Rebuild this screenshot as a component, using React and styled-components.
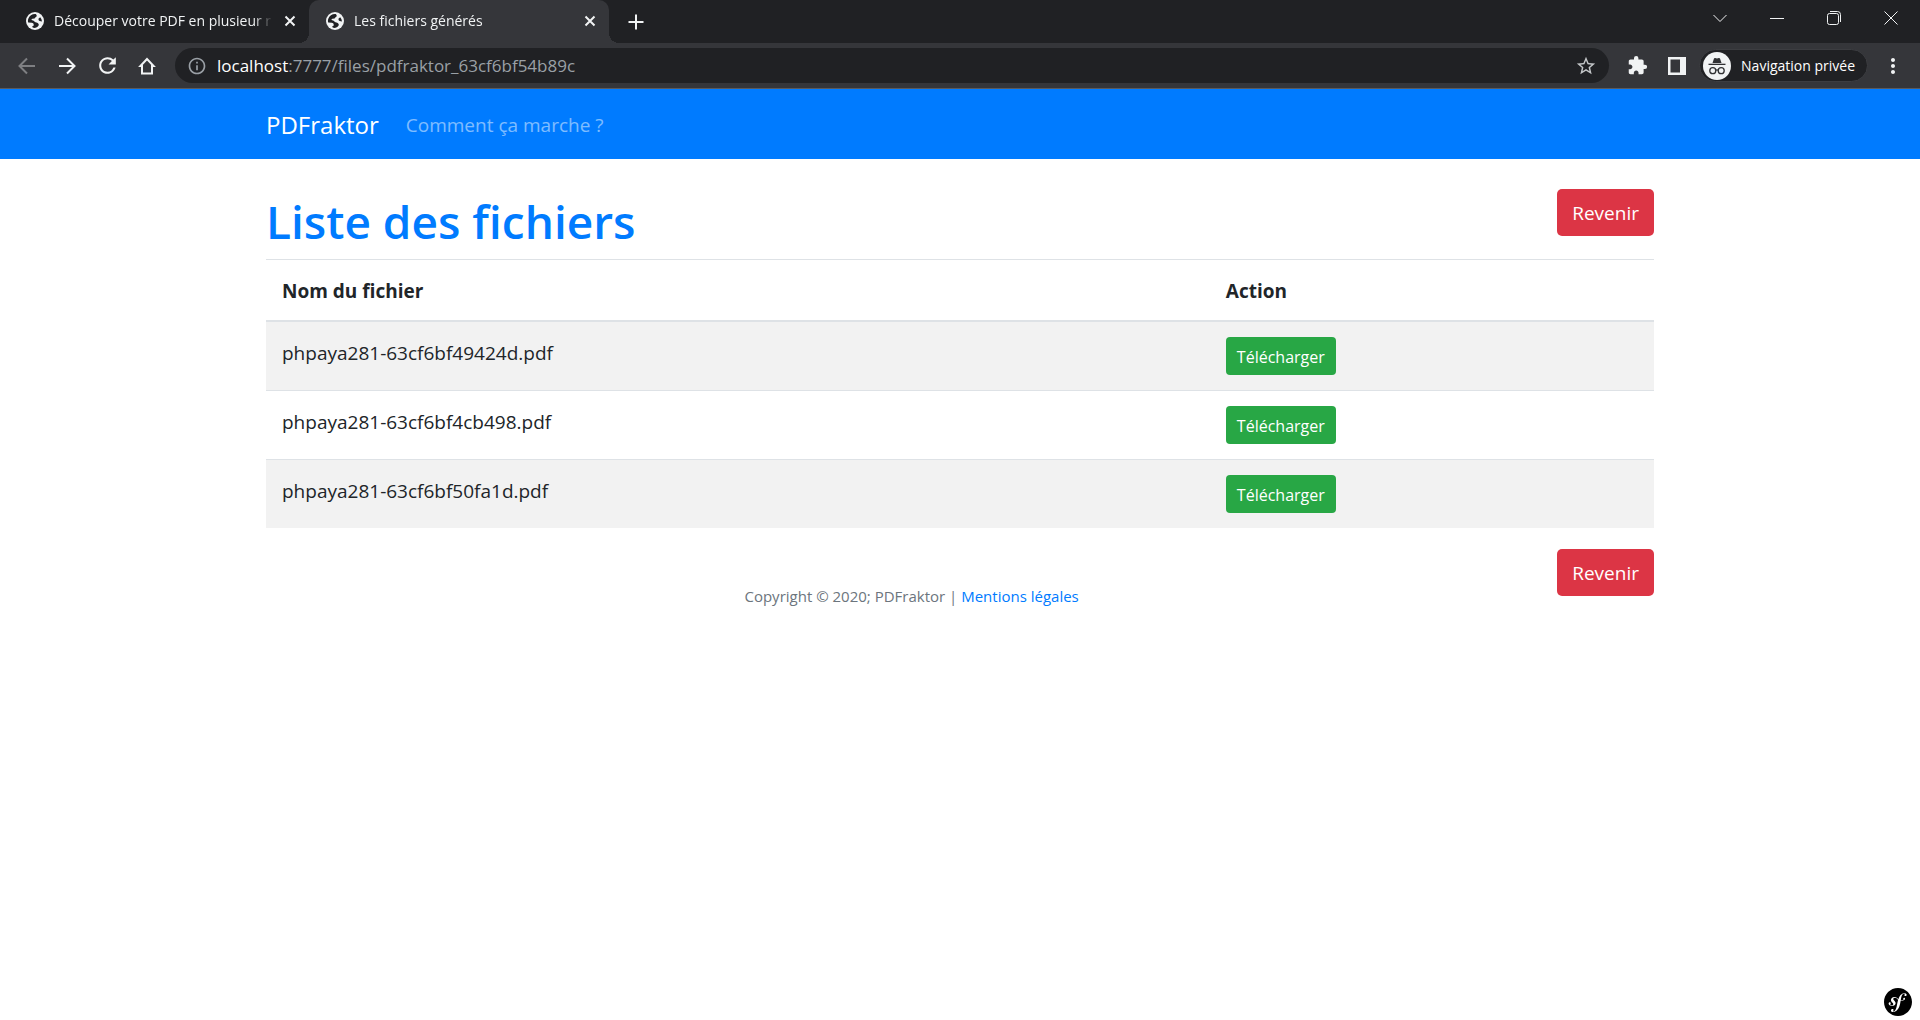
import React from "react";
import styled, { createGlobalStyle, css } from "styled-components";
import {
  MdRefresh, MdInfoOutline, MdStarBorder, MdExtension, MdMoreVert,
} from "react-icons/md";
import { SiSymfony } from "react-icons/si";

const GlobalStyle = createGlobalStyle`
  *, *::before, *::after { box-sizing: border-box; }
  body {
    margin: 0;
    background: #fff;
    color: #212529;
    font-family: "Segoe UI", "Open Sans", "Noto Sans", sans-serif;
    font-size: 19px;
    line-height: 32px;
  }
  svg { display: block; flex: none; }
`;

const IconButton = styled.button`
  display: flex;
  align-items: center;
  justify-content: center;
  flex: none;
  width: ${(p) => p.$width || 40}px;
  height: ${(p) => p.$height || 36}px;
  padding: 0;
  border: 0;
  background: none;
  color: ${(p) => (p.$muted ? "#7e7f82" : "#f1f3f4")};
  cursor: pointer;
`;

const TabStrip = styled.div`
  display: flex;
  height: 43px;
  background: #202124;
  color: #f1f3f4;
`;

const Tabs = styled.div`
  display: flex;
  flex: 1;
  min-width: 0;
  padding-left: 9px;
`;

const Tab = styled.div`
  position: relative;
  display: flex;
  align-items: center;
  flex: 0 1 300px;
  min-width: 0;
  padding: 0 12px 2px 17px;
  gap: 10px;
  ${(p) => p.$active && css`
    background: #35363a;
    border-radius: 10px 10px 0 0;
    &::before, &::after {
      content: "";
      position: absolute;
      bottom: 0;
      width: 10px;
      height: 10px;
    }
    &::before {
      right: 100%;
      background: radial-gradient(circle at 0 0, transparent 10px, #35363a 10px);
    }
    &::after {
      left: 100%;
      background: radial-gradient(circle at 100% 0, transparent 10px, #35363a 10px);
    }
  `}
`;

const TabTitle = styled.span`
  flex: 1;
  min-width: 0;
  overflow: hidden;
  white-space: nowrap;
  font-size: 14px;
  line-height: 20px;
  mask-image: linear-gradient(to right, #000 calc(100% - 20px), transparent);
`;

const WindowControls = styled.div`
  display: flex;
  flex: none;
  padding-right: 1px;
`;

const Toolbar = styled.div`
  display: flex;
  align-items: center;
  height: 46px;
  padding: 0 7px;
  background: #35363a;
  border-bottom: 1px solid #5a5b5e;
`;

const AddressBar = styled.div`
  display: flex;
  align-items: center;
  flex: 1;
  min-width: 0;
  height: 35px;
  margin: 0 8px;
  padding: 0 12px;
  gap: 10px;
  border-radius: 18px;
  background: #202124;
  color: #9aa0a6;
`;

const Address = styled.span`
  flex: 1;
  min-width: 0;
  overflow: hidden;
  white-space: nowrap;
  font-size: 17px;
  line-height: 24px;
`;

const Host = styled.span`
  color: #fff;
`;

const PrivateBadge = styled.button`
  display: flex;
  align-items: center;
  flex: none;
  height: 33px;
  margin: 0 5px 0 2px;
  padding: 0 12px 0 3px;
  gap: 10px;
  border: 1px solid #3c3d41;
  border-radius: 17px;
  background: #202124;
  color: #fff;
  font-family: inherit;
  font-size: 14px;
  line-height: 20px;
`;

const Container = styled.div`
  width: 100%;
  max-width: 1426px;
  margin: 0 auto;
  padding: 0 19px;
`;

const Navbar = styled.nav`
  padding: 10px 0;
  background: #007bff;
`;

const NavInner = styled(Container)`
  display: flex;
  align-items: center;
  gap: 27px;
  height: 50px;
  padding-top: 2px;
`;

const Brand = styled.a`
  color: #fff;
  font-size: 24px;
  text-decoration: none;
`;

const NavLink = styled.a`
  color: rgba(255, 255, 255, 0.5);
  text-decoration: none;
`;

const Main = styled(Container)`
  padding-top: 30px;
`;

const Row = styled.div`
  display: flex;
  align-items: flex-start;
  justify-content: space-between;
`;

const Title = styled.h1`
  margin: 0 0 6px;
  color: #007bff;
  font-size: 46px;
  font-weight: 600;
  line-height: 64px;
`;

const Button = styled.a`
  display: inline-block;
  flex: none;
  color: #fff;
  text-align: center;
  text-decoration: none;
  ${(p) => p.$small ? css`
    padding: 6px 11px 4px;
    border-radius: 4px;
    background: #28a745;
    font-size: 16px;
    line-height: 28px;
  ` : css`
    padding: 8px 15px 7px;
    border-radius: 5px;
    background: #dc3545;
    line-height: 32px;
  `}
`;

const Table = styled.table`
  width: 100%;
  margin-bottom: 21px;
  border-spacing: 0;
`;

const HeadCell = styled.th`
  width: ${(p) => p.$width};
  padding: 15px 16px 13px;
  border-top: 1px solid #dee2e6;
  border-bottom: 1px solid #dee2e6;
  text-align: left;
  font-weight: 700;
`;

const BodyRow = styled.tr`
  &:nth-child(odd) { background: #f2f2f2; }
`;

const Cell = styled.td`
  padding: 15px 16px;
  border-top: 1px solid #dee2e6;
  vertical-align: top;
`;

const CellButton = styled(Button)`
  display: block;
  width: fit-content;
`;

const Copyright = styled.small`
  flex: 1;
  padding-top: 31px;
  color: #6c757d;
  text-align: center;
  font-size: 15px;
`;

const TextLink = styled.a`
  color: #007bff;
  text-decoration: none;
`;

const DebugButton = styled.button`
  position: fixed;
  right: 8px;
  bottom: 4px;
  padding: 0;
  border: 0;
  border-radius: 50%;
  background: #fff;
  color: #000;
`;

const files = [
  "phpaya281-63cf6bf49424d.pdf",
  "phpaya281-63cf6bf4cb498.pdf",
  "phpaya281-63cf6bf50fa1d.pdf",
];

const Stroke = ({ d, size = 14, width = 1 }) => (
  <svg width={size} height={size} viewBox={`0 0 ${size} ${size}`} fill="none" stroke="currentColor" strokeWidth={width}>
    <path d={d} />
  </svg>
);

const Globe = () => (
  <svg width="18" height="18" viewBox="0 0 18 18">
    <circle cx="9" cy="9" r="9" fill="#f1f3f4" />
    <path
      d="M9.800 2C6.500 1.600 3.400 3.600 2.300 6.800 1.800 8.200 1.900 9.500 2.200 10.500L5.800 10.700Q7.600 10.900 7.700 12.600L7.800 13.600 6.300 14.200Q6.200 15.200 7.200 15.800C9.400 16.200 11.600 15.300 12.600 13.600 13.200 12.500 12.400 11.300 11.200 10.800L8.800 9.900Q8.200 8.800 7 8.500L5.600 8Q5.200 7 6.400 6.700L8.600 6.600Q9 5.300 10.400 4.800 11.400 3.300 9.800 2z"
      fill="#202124"
    />
    <path d="M14.200 5.200Q16 7.200 16 9.400L13.600 8.900Q11.900 8.200 12.600 6.500z" fill="#202124" />
  </svg>
);

const Incognito = () => (
  <svg width="28" height="28" viewBox="0 0 28 28">
    <circle cx="14" cy="14" r="14" fill="#f1f3f4" />
    <path d="M9.500 11 11 6.600q.3-.8 1.200-.6l1.800.5 1.800-.5q.9-.2 1.200.6L18.500 11z" fill="#303134" />
    <path d="M5.500 11.700h17v1.300h-17z" fill="#303134" />
    <g fill="none" stroke="#303134" strokeWidth="1.300">
      <circle cx="9.800" cy="18.700" r="3" />
      <circle cx="18.200" cy="18.700" r="3" />
      <path d="M12.800 18.300q1.200-.8 2.400 0" />
    </g>
  </svg>
);

const CloseTab = () => (
  <IconButton $width={14} $height={20} aria-label="Fermer l'onglet">
    <Stroke size={12} width={2} d="M1.500 1.500l9 9M10.500 1.500l-9 9" />
  </IconButton>
);

export default function App() {
  return (
    <>
      <GlobalStyle />
      <TabStrip>
        <Tabs>
          <Tab>
            <Globe />
            <TabTitle>Découper votre PDF en plusieur r</TabTitle>
            <CloseTab />
          </Tab>
          <Tab $active>
            <Globe />
            <TabTitle>Les fichiers générés</TabTitle>
            <CloseTab />
          </Tab>
          <IconButton $width={54} $height={43} aria-label="Nouvel onglet">
            <Stroke size={16} width={2} d="M8 .5v15M.5 8h15" />
          </IconButton>
        </Tabs>
        <WindowControls>
          <IconButton $width={57} aria-label="Rechercher"><Stroke d="M.5 4 7 10.500 13.500 4" /></IconButton>
          <IconButton $width={57} aria-label="Réduire"><Stroke d="M0 7.500h14" /></IconButton>
          <IconButton $width={57} aria-label="Restaurer"><Stroke d="M2.500 2.500h7q2 0 2 2v7q0 2-2 2h-7q-2 0-2-2v-7q0-2 2-2zM3 .5h7.500q3 0 3 3V11" /></IconButton>
          <IconButton $width={57} aria-label="Fermer"><Stroke d="M.5.5l13 13M13.500.5l-13 13" /></IconButton>
        </WindowControls>
      </TabStrip>
      <Toolbar>
        <IconButton $muted aria-label="Précédent"><Stroke size={18} width={2} d="M17 9H2M9 1.500 1.500 9 9 16.500" /></IconButton>
        <IconButton aria-label="Suivant"><Stroke size={18} width={2} d="M1 9h15M9 1.500 16.500 9 9 16.500" /></IconButton>
        <IconButton aria-label="Actualiser"><MdRefresh size={25} /></IconButton>
        <IconButton aria-label="Accueil"><Stroke size={20} width={2} d="M10 3 3.400 10H5V17.500H15V10H16.600z" /></IconButton>
        <AddressBar>
          <MdInfoOutline size={20} />
          <Address><Host>localhost</Host>:7777/files/pdfraktor_63cf6bf54b89c</Address>
          <MdStarBorder size={22} color="#c4c7c9" />
        </AddressBar>
        <IconButton aria-label="Extensions"><MdExtension size={21} /></IconButton>
        <IconButton aria-label="Panneau latéral">
          <svg width="18" height="18" viewBox="0 0 18 18"><path d="M0 0h18v18H0zM2.500 2.500v13H12v-13z" fill="currentColor" fillRule="evenodd" /></svg>
        </IconButton>
        <PrivateBadge><Incognito />Navigation privée</PrivateBadge>
        <IconButton aria-label="Menu"><MdMoreVert size={24} /></IconButton>
      </Toolbar>
      <Navbar>
        <NavInner>
          <Brand href="#">PDFraktor</Brand>
          <NavLink href="#">Comment ça marche ?</NavLink>
        </NavInner>
      </Navbar>
      <Main as="main">
        <Row>
          <Title>Liste des fichiers</Title>
          <Button href="#">Revenir</Button>
        </Row>
        <Table>
          <thead>
            <tr>
              <HeadCell $width="68%">Nom du fichier</HeadCell>
              <HeadCell>Action</HeadCell>
            </tr>
          </thead>
          <tbody>
            {files.map((name) => (
              <BodyRow key={name}>
                <Cell>{name}</Cell>
                <Cell><CellButton $small href="#">Télécharger</CellButton></Cell>
              </BodyRow>
            ))}
          </tbody>
        </Table>
        <Row>
          <Copyright>Copyright © 2020; PDFraktor | <TextLink href="#">Mentions légales</TextLink></Copyright>
          <Button href="#">Revenir</Button>
        </Row>
      </Main>
      <DebugButton aria-label="Symfony"><SiSymfony size={28} /></DebugButton>
    </>
  );
}
